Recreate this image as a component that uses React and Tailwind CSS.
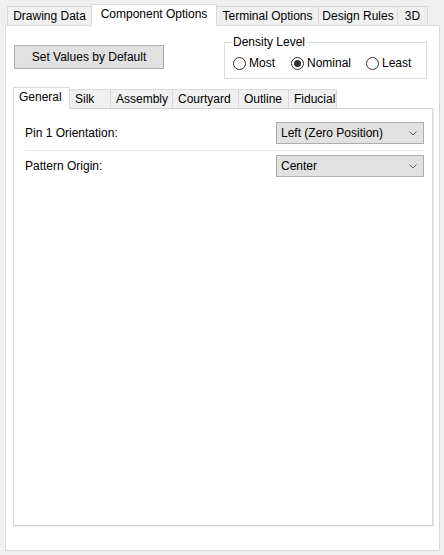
import { useState } from "react";

const outerTabs = [
  { label: "Drawing Data", w: "w-[85px]" },
  { label: "Component Options", w: "w-[126px]" },
  { label: "Terminal Options", w: "w-[103px]" },
  { label: "Design Rules", w: "w-[80px]" },
  { label: "3D", w: "w-[31px]" },
];

const innerTabs = [
  { label: "General", w: "w-[57px]" },
  { label: "Silk", w: "w-[42px]" },
  { label: "Assembly", w: "w-[63px]" },
  { label: "Courtyard", w: "w-[67px]" },
  { label: "Outline", w: "w-[51px]" },
  { label: "Fiducial", w: "w-[49px]" },
];

const Tab = ({ label, w, active, first, left, onClick }) => (
  <button
    type="button"
    onClick={onClick}
    className={`${w} ${first ? "" : "-ml-px"} ${
      active
        ? "relative z-10 h-[22px] -mb-px bg-white"
        : "h-[19px] bg-[#f0f0f0]"
    } ${left ? "justify-start pl-[5px]" : "justify-center"} flex items-start border border-b-0 border-[#d9d9d9] pt-[2px] leading-[14px] text-black`}
  >
    {label}
  </button>
);

const Radio = ({ label, checked, w, onClick }) => (
  <button type="button" onClick={onClick} className={`${w} flex items-center gap-[3px]`}>
    <span className="flex h-[13px] w-[13px] items-center justify-center rounded-full border border-[#333333] bg-white">
      {checked ? <span className="h-[7px] w-[7px] rounded-full bg-[#333333]" /> : null}
    </span>
    <span className="leading-[14px]">{label}</span>
  </button>
);

const Select = ({ value }) => (
  <div className="flex h-[22px] w-[148px] items-center justify-between border border-[#adadad] bg-[#e1e1e1] pl-[4px] pr-[6px]">
    <span className="leading-[14px]">{value}</span>
    <svg width="8" height="5" viewBox="0 0 8 5" className="mt-[1px]">
      <path d="M0.5 0.5 L4 4 L7.5 0.5" fill="none" stroke="#606060" strokeWidth="1" />
    </svg>
  </div>
);

export default function App() {
  const [outer, setOuter] = useState(1);
  const [inner, setInner] = useState(0);
  const [density, setDensity] = useState("Nominal");

  return (
    <div
      className="flex h-[555px] w-[444px] flex-col bg-[#f0f0f0] pt-[5px] pl-[5px] text-[12px] text-black"
      style={{ fontFamily: '"Liberation Sans", Arial, sans-serif' }}
    >
      <div className="flex h-[20px] items-end pl-[2px]">
        {outerTabs.map((t, i) => (
          <Tab key={t.label} {...t} first={i === 0} active={outer === i} onClick={() => setOuter(i)} />
        ))}
      </div>

      <div className="flex h-[526px] w-[435px] flex-col border border-[#d9d9d9] bg-white">
        <div className="flex items-start justify-between pl-[8px] pr-[12px]">
          <button
            type="button"
            className="mt-[19px] h-[24px] w-[150px] border border-[#adadad] bg-[#e1e1e1] leading-[14px]"
          >
            Set Values by Default
          </button>

          <fieldset className="mt-[9px] h-[44px] w-[202px] border border-[#dcdcdc] px-[8px] pb-[4px]">
            <legend className="-ml-px px-[1px] leading-[14px]">Density Level</legend>
            <div className="flex items-center pt-[7px]">
              <Radio label="Most" w="w-[58px]" checked={density === "Most"} onClick={() => setDensity("Most")} />
              <Radio label="Nominal" w="w-[75px]" checked={density === "Nominal"} onClick={() => setDensity("Nominal")} />
              <Radio label="Least" w="w-[52px]" checked={density === "Least"} onClick={() => setDensity("Least")} />
            </div>
          </fieldset>
        </div>

        <div className="mt-[8px] flex h-[21px] items-end pl-[7px]">
          {innerTabs.map((t, i) => (
            <Tab key={t.label} {...t} left first={i === 0} active={inner === i} onClick={() => setInner(i)} />
          ))}
        </div>

        <div className="ml-[7px] flex h-[418px] w-[420px] flex-col border border-[#d5d5d5] bg-white pt-[13px] pr-[8px] pl-[11px] shadow-[1px_1px_0_#ececec]">
          <div className="flex items-center justify-between">
            <span className="leading-[14px]">Pin 1 Orientation:</span>
            <Select value="Left (Zero Position)" />
          </div>
          <div className="mt-[6px] mb-[4px] h-px bg-[#e8e8e8]" />
          <div className="flex items-center justify-between">
            <span className="leading-[14px]">Pattern Origin:</span>
            <Select value="Center" />
          </div>
        </div>
      </div>
    </div>
  );
}
